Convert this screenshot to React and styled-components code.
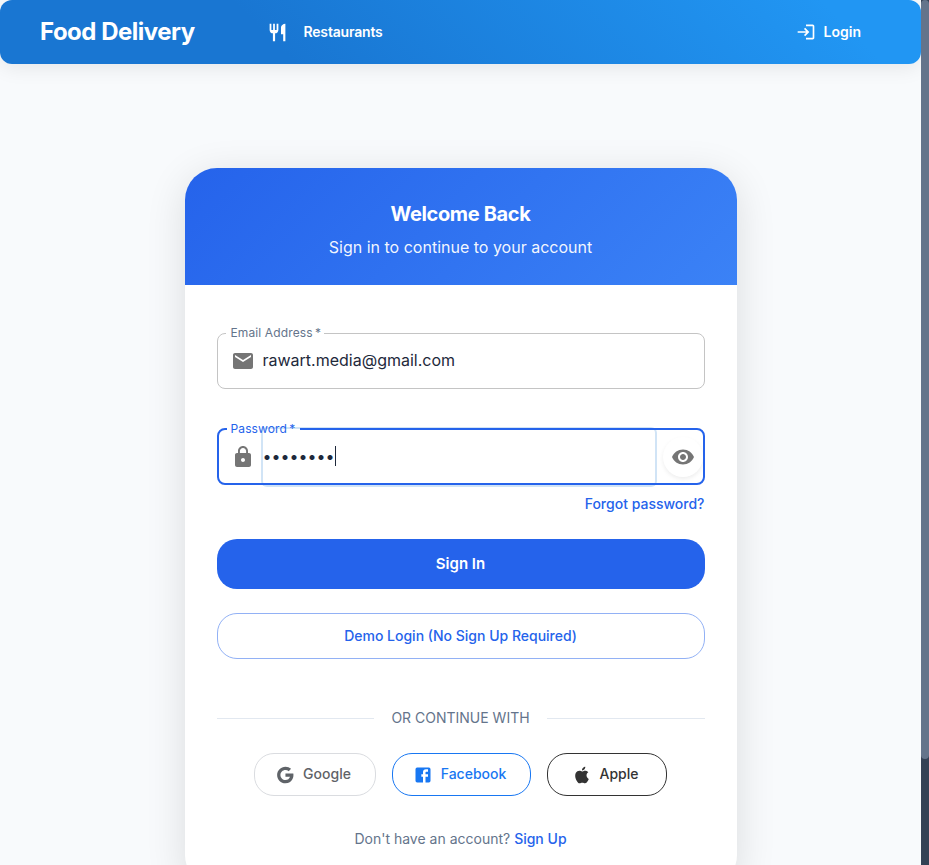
import React from "react";
import styled, { createGlobalStyle } from "styled-components";
import { MdRestaurant, MdLogin, MdEmail, MdLock, MdVisibility } from "react-icons/md";

const GlobalStyle = createGlobalStyle`
  *, *::before, *::after { box-sizing: border-box; }
  body {
    margin: 0;
    overflow: hidden;
    font-family: Inter, "Liberation Sans", sans-serif;
    background: #f8fafc;
    color: #1e293b;
  }
  button { font-family: inherit; cursor: pointer; }
  a { text-decoration: none; }
`;

const Viewport = styled.div`
  display: grid;
  grid-template-columns: 1fr 8px;
  height: 865px;
  overflow: hidden;
`;

const Page = styled.div`
  display: flex;
  flex-direction: column;
  min-width: 0;
  height: 865px;
  overflow: hidden;
  background: #f8fafc;
`;

const ScrollTrack = styled.div`
  background: #334155;
`;

const ScrollThumb = styled.div`
  height: 759px;
  border-radius: 4px;
  background: #64748b;
`;

const NavBar = styled.header`
  display: flex;
  align-items: center;
  flex: none;
  height: 64px;
  padding: 0 60px 0 40px;
  border-radius: 12px;
  color: #fff;
  background: linear-gradient(45deg, #1976d2 30%, #2196f3 90%);
  box-shadow: 0 4px 20px rgba(0, 0, 0, 0.08);
`;

const Brand = styled.div`
  width: 227px;
  font-size: 24px;
  font-weight: 700;
  line-height: 32px;
  letter-spacing: -0.5px;
  white-space: nowrap;
`;

const ButtonText = styled.span`
  padding-bottom: 2px;
`;

const NavLink = styled.a`
  display: flex;
  align-items: center;
  gap: ${(p) => p.$gap}px;
  margin-left: ${(p) => (p.$end ? "auto" : "0")};
  font-size: 14px;
  font-weight: 600;
  letter-spacing: ${(p) => p.$tracking || 0}px;
  color: #fff;
`;

const Main = styled.main`
  display: flex;
  justify-content: center;
  padding-top: 104px;
`;

const Card = styled.section`
  flex: none;
  width: 552px;
  height: 719px;
  border-radius: 32px;
  overflow: hidden;
  background: #fff;
  box-shadow: 0 8px 40px rgba(0, 0, 0, 0.12);
`;

const CardHeader = styled.div`
  height: 117px;
  padding-top: 32px;
  text-align: center;
  color: #fff;
  background: linear-gradient(135deg, #2563eb 0%, #3b82f6 100%);
`;

const Title = styled.h1`
  margin: 0;
  font-size: 20px;
  font-weight: 700;
  line-height: 28px;
  letter-spacing: -0.36px;
`;

const Subtitle = styled.p`
  margin: 7px 0 0;
  font-size: 16px;
  line-height: 24px;
  color: rgba(255, 255, 255, 0.95);
`;

const Form = styled.form`
  display: flex;
  flex-direction: column;
  padding: 48px 32px 0;
`;

const Field = styled.div`
  position: relative;
  display: flex;
  align-items: center;
  height: 56px;
  margin-bottom: ${(p) => p.$gap}px;
  padding-left: 14px;
  color: #757575;
`;

const Outline = styled.fieldset`
  position: absolute;
  inset: ${(p) => (p.$focused ? "-6px" : "-5px")} 0 0;
  margin: 0;
  padding: 0 8px;
  border: ${(p) => (p.$focused ? "2px solid #2563eb" : "1px solid #c4c4c4")};
  border-radius: 8px;
  pointer-events: none;
`;

const Notch = styled.legend`
  width: ${(p) => p.$width}px;
  height: 11px;
  padding: 0;
`;

const Label = styled.label`
  position: absolute;
  left: 14px;
  top: -8px;
  font-size: 12px;
  line-height: 16px;
  letter-spacing: ${(p) => p.$tracking}px;
  white-space: pre;
  color: ${(p) => (p.$focused ? "#2563eb" : "#64748b")};
`;

const FieldValue = styled.div`
  display: flex;
  align-items: center;
  height: 56px;
  width: ${(p) => (p.$focused ? "392px" : "auto")};
  margin-left: 8px;
  font-size: 16px;
  color: #1e293b;
  border-radius: 4px;
  box-shadow: ${(p) => (p.$focused ? "0 0 0 2px rgba(25, 118, 210, 0.2)" : "none")};
`;

const Caret = styled.span`
  width: 1px;
  height: 20px;
  margin-bottom: 2px;
  background: #1e293b;
`;

const RevealButton = styled.button`
  display: grid;
  place-items: center;
  width: 40px;
  height: 40px;
  margin-left: 8px;
  padding: 0;
  border: 0;
  border-radius: 50%;
  background: #fff;
  color: #757575;
  box-shadow: 0 2px 4px rgba(0, 0, 0, 0.07);
`;

const TextLink = styled.a`
  align-self: ${(p) => (p.$end ? "flex-end" : "auto")};
  font-size: 14px;
  font-weight: 500;
  line-height: 20px;
  color: #2563eb;
`;

const PrimaryButton = styled.button`
  height: 50px;
  margin-top: 25px;
  padding: 0 0 2px;
  border: 0;
  border-radius: 20px;
  background: #2563eb;
  color: #fff;
  font-size: 15px;
  font-weight: 600;
`;

const OutlinedButton = styled.button`
  height: 46px;
  margin-top: 24px;
  padding: 0 0 2px;
  border: 1px solid #92b1f5;
  border-radius: 20px;
  background: #fff;
  color: #2563eb;
  font-size: 14px;
  font-weight: 500;
`;

const Divider = styled.div`
  display: flex;
  align-items: center;
  gap: 17.5px;
  height: 20px;
  margin-top: 49px;
  font-size: 14px;
  color: #64748b;
  white-space: nowrap;

  &::before, &::after {
    content: "";
    flex: 1;
    height: 1px;
    background: #e2e8f0;
  }
`;

const SocialRow = styled.div`
  display: flex;
  justify-content: center;
  gap: 16px;
  margin-top: 25px;
`;

const SocialButton = styled.button`
  display: flex;
  align-items: center;
  justify-content: center;
  gap: 8px;
  width: ${(p) => p.$width}px;
  height: 43px;
  padding: 0 4px 0 0;
  border: 1px solid ${(p) => p.$border};
  border-radius: 20px;
  background: #fff;
  color: ${(p) => p.$color};
  font-size: 14px;
  font-weight: 500;
`;

const SocialIcon = styled.svg`
  width: 20px;
  height: 20px;
  fill: currentColor;
`;

const SignUpRow = styled.p`
  margin: 33px 0 0;
  text-align: center;
  font-size: 14px;
  line-height: 20px;
  color: #64748b;
`;

const socials = [
  {
    name: "Google", width: 122, color: "#5f6368", border: "#dadce0",
    path: "M12.545,10.239v3.821h5.445c-0.712,2.315-2.647,3.972-5.445,3.972c-3.332,0-6.033-2.701-6.033-6.032s2.701-6.032,6.033-6.032c1.498,0,2.866,0.549,3.921,1.453l2.814-2.814C17.503,2.988,15.139,2,12.545,2C7.021,2,2.543,6.477,2.543,12s4.478,10,10.002,10c8.396,0,10.249-7.85,9.426-11.748L12.545,10.239z",
  },
  {
    name: "Facebook", width: 139, color: "#1877f2", border: "#1877f2",
    path: "M5 3h14a2 2 0 0 1 2 2v14a2 2 0 0 1-2 2H5a2 2 0 0 1-2-2V5a2 2 0 0 1 2-2m13 2h-2.5A3.5 3.5 0 0 0 12 8.5V11h-2v3h2v7h3v-7h3v-3h-3V9a1 1 0 0 1 1-1h2V5z",
  },
  {
    name: "Apple", width: 120, color: "#333333", border: "#333333",
    path: "M18.71 19.5c-.83 1.24-1.71 2.45-3.05 2.47-1.34.03-1.77-.79-3.29-.79-1.53 0-2 .77-3.27.82-1.31.05-2.3-1.32-3.14-2.53C4.25 17 2.94 12.45 4.7 9.39c.87-1.52 2.43-2.48 4.12-2.51 1.28-.02 2.5.87 3.29.87.78 0 2.26-1.07 3.81-.91.65.03 2.47.26 3.64 1.98-.09.06-2.17 1.28-2.15 3.81.03 3.02 2.65 4.03 2.68 4.04-.03.07-.42 1.44-1.38 2.83M13 3.5c.73-.83 1.94-1.46 2.94-1.5.13 1.17-.34 2.35-1.04 3.19-.69.85-1.83 1.51-2.95 1.42-.15-1.15.41-2.35 1.05-3.11z",
  },
];

export default function App() {
  return (
    <>
      <GlobalStyle />
      <Viewport>
        <Page>
          <NavBar>
            <Brand>Food Delivery</Brand>
            <NavLink $gap={15.5} $tracking={-0.18}>
              <MdRestaurant size={21} />
              <ButtonText>Restaurants</ButtonText>
            </NavLink>
            <NavLink $gap={8} $end>
              <MdLogin size={20} />
              <ButtonText>Login</ButtonText>
            </NavLink>
          </NavBar>
          <Main>
            <Card>
              <CardHeader>
                <Title>Welcome Back</Title>
                <Subtitle>Sign in to continue to your account</Subtitle>
              </CardHeader>
              <Form>
                <Field $gap={40}>
                  <MdEmail size={24} />
                  <FieldValue><ButtonText>rawart.media@gmail.com</ButtonText></FieldValue>
                  <Outline><Notch $width={98} /></Outline>
                  <Label $tracking={0.12}>{"Email Address\u2009*"}</Label>
                </Field>
                <Field $gap={9}>
                  <MdLock size={24} />
                  <FieldValue $focused>
                    <ButtonText>••••••••</ButtonText>
                    <Caret />
                  </FieldValue>
                  <RevealButton type="button" aria-label="Show password">
                    <MdVisibility size={24} />
                  </RevealButton>
                  <Outline $focused><Notch $width={73} /></Outline>
                  <Label $focused $tracking={0.12}>{"Password\u2009*"}</Label>
                </Field>
                <TextLink $end>Forgot password?</TextLink>
                <PrimaryButton type="button">Sign In</PrimaryButton>
                <OutlinedButton type="button">Demo Login (No Sign Up Required)</OutlinedButton>
                <Divider><ButtonText>OR CONTINUE WITH</ButtonText></Divider>
                <SocialRow>
                  {socials.map((s) => (
                    <SocialButton type="button" key={s.name} $width={s.width} $color={s.color} $border={s.border}>
                      <SocialIcon viewBox="0 0 24 24"><path d={s.path} /></SocialIcon>
                      <ButtonText>{s.name}</ButtonText>
                    </SocialButton>
                  ))}
                </SocialRow>
                <SignUpRow>
                  Don't have an account? <TextLink>Sign Up</TextLink>
                </SignUpRow>
              </Form>
            </Card>
          </Main>
        </Page>
        <ScrollTrack><ScrollThumb /></ScrollTrack>
      </Viewport>
    </>
  );
}
